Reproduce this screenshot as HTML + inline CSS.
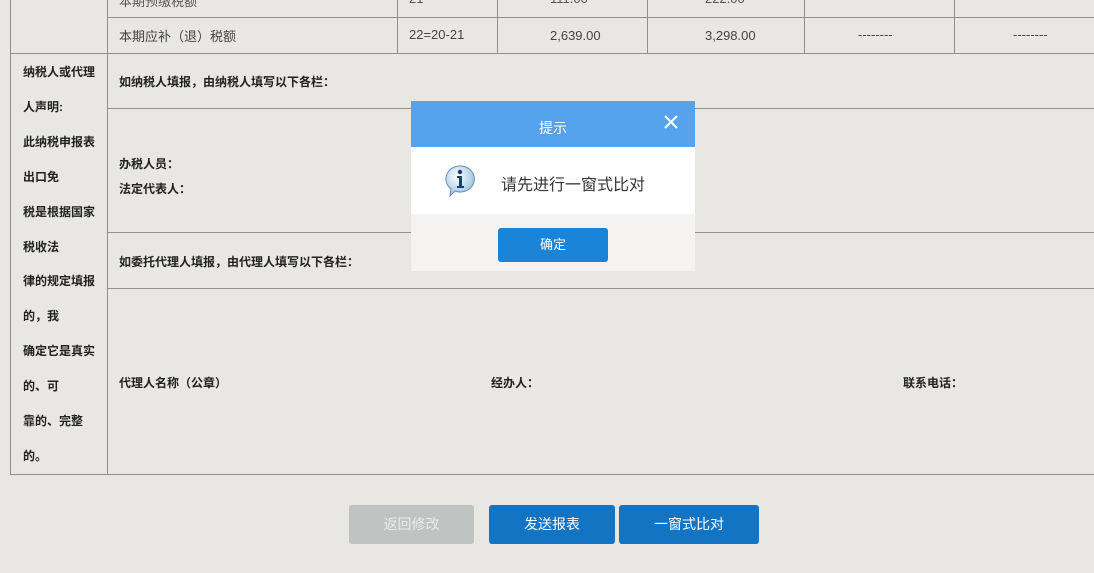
<!DOCTYPE html>
<html><head><meta charset="utf-8"><style>
body{margin:0;width:1094px;height:573px;background:#e8e7e4;position:relative;overflow:hidden;font-family:"Liberation Sans","Noto Sans CJK SC",sans-serif;font-size:13px;color:#333}
.l{position:absolute;background:#8f8f8f}
.t{position:absolute;white-space:nowrap}
.b{font-weight:bold;font-size:12px;color:#222}
.btn{position:absolute;color:#fff;text-align:center;border-radius:3px;font-size:14px}
</style></head><body>
<div class="l" style="left:107px;top:17px;width:987px;height:1px"></div>
<div class="l" style="left:10px;top:53px;width:1084px;height:1px"></div>
<div class="l" style="left:107px;top:108px;width:987px;height:1px"></div>
<div class="l" style="left:107px;top:232px;width:987px;height:1px"></div>
<div class="l" style="left:107px;top:288px;width:987px;height:1px"></div>
<div class="l" style="left:10px;top:474px;width:1084px;height:1px"></div>
<div class="l" style="left:10px;top:0;width:1px;height:475px"></div>
<div class="l" style="left:107px;top:0;width:1px;height:475px"></div>
<div class="l" style="left:397px;top:0;width:1px;height:53px"></div>
<div class="l" style="left:497px;top:0;width:1px;height:53px"></div>
<div class="l" style="left:647px;top:0;width:1px;height:53px"></div>
<div class="l" style="left:804px;top:0;width:1px;height:53px"></div>
<div class="l" style="left:954px;top:0;width:1px;height:53px"></div>
<div class="t" style="left:119px;top:-9px;color:#555">本期预缴税额</div>
<div class="t" style="left:409px;top:-9px;color:#555">21</div>
<div class="t" style="left:550px;top:-9px;color:#555">111.00</div>
<div class="t" style="left:705px;top:-9px;color:#555">222.00</div>
<div class="t" style="left:119px;top:26px;color:#444">本期应补（退）税额</div>
<div class="t" style="left:409px;top:27px;color:#444">22=20-21</div>
<div class="t" style="left:550px;top:28px;color:#444">2,639.00</div>
<div class="t" style="left:705px;top:28px;color:#444">3,298.00</div>
<div class="t" style="left:858px;top:27px;color:#444">--------</div>
<div class="t" style="left:1013px;top:27px;color:#444">--------</div>
<div class="t b" style="left:23px;top:55px;line-height:34.9px;white-space:normal;width:80px">纳税人或代理<br>人声明:<br>此纳税申报表<br>出口免<br>税是根据国家<br>税收法<br>律的规定填报<br>的，我<br>确定它是真实<br>的、可<br>靠的、完整<br>的。</div>
<div class="t b" style="left:119px;top:73px">如纳税人填报，由纳税人填写以下各栏：</div>
<div class="t b" style="left:119px;top:155px">办税人员：</div>
<div class="t b" style="left:119px;top:180px">法定代表人：</div>
<div class="t b" style="left:119px;top:253px">如委托代理人填报，由代理人填写以下各栏：</div>
<div class="t b" style="left:119px;top:374px">代理人名称（公章）</div>
<div class="t b" style="left:491px;top:374px">经办人：</div>
<div class="t b" style="left:903px;top:374px">联系电话：</div>
<div class="btn" style="left:349px;top:505px;width:125px;height:39px;line-height:39px;background:#bfc3c1;color:#e9ecea">返回修改</div>
<div class="btn" style="left:489px;top:505px;width:126px;height:39px;line-height:39px;background:#1474c4">发送报表</div>
<div class="btn" style="left:619px;top:505px;width:140px;height:39px;line-height:39px;background:#1474c4">一窗式比对</div>
<div style="position:absolute;left:411px;top:101px;width:284px;height:170px;background:#f4f3f1">
<div style="height:46px;background:#55a3ec;color:#fff;text-align:center;line-height:54px;font-size:14px;position:relative">提示
<svg style="position:absolute;left:253px;top:14px" width="14" height="14"><path d="M1 1L13 13M13 1L1 13" stroke="#fff" stroke-width="2"/></svg></div>
<div style="height:67px;background:#fff;position:relative">
<svg style="position:absolute;left:33px;top:17px" width="34" height="34" viewBox="0 0 34 34"><defs><radialGradient id="g" cx="40%" cy="35%" r="65%"><stop offset="0" stop-color="#fff"/><stop offset="1" stop-color="#9cc3e0"/></radialGradient></defs><path d="M16 2a14 13 0 1 1-5 25l-5 5 1-7A14 13 0 0 1 16 2z" fill="url(#g)" stroke="#6a8fb0"/><circle cx="16" cy="8" r="2.2" fill="#1a3c7a"/><path d="M13 12h5v10h2v2h-7v-2h2v-8h-2z" fill="#1a3c7a"/></svg>
<div class="t" style="left:90px;top:24px;font-size:16px;color:#333">请先进行一窗式比对</div></div>
<div class="btn" style="left:87px;top:127px;width:110px;height:34px;line-height:34px;background:#1a85d8;font-size:13px">确定</div>
</div>
</body></html>
